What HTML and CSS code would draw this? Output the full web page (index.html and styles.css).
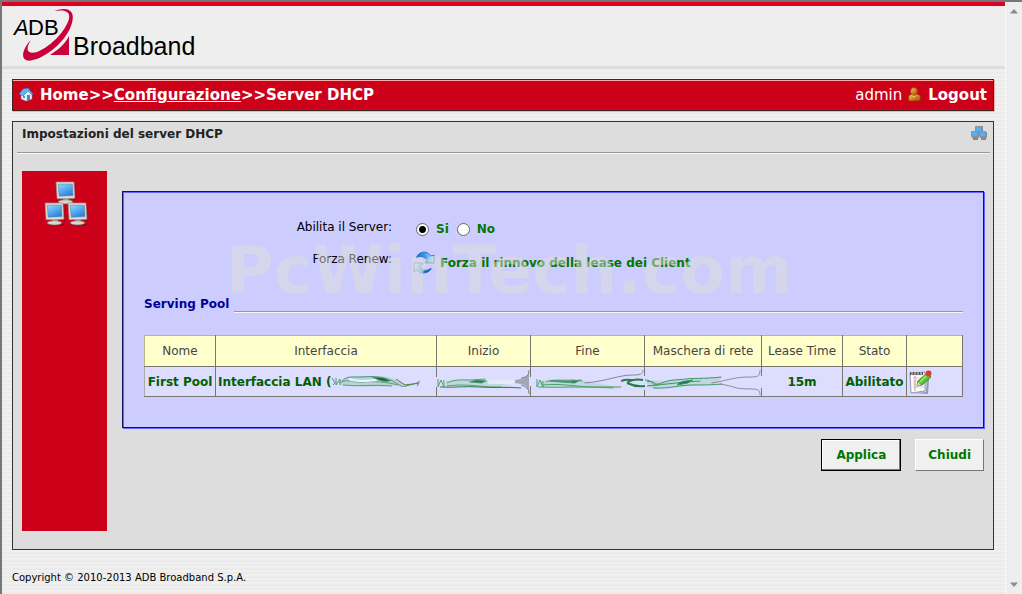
FILE: index.html
```html
<!DOCTYPE html>
<html lang="it">
<head>
<meta charset="utf-8">
<title>Impostazioni del server DHCP</title>
<link rel="stylesheet" href="styles.css">
</head>
<body>
<svg class="defs" width="0" height="0" aria-hidden="true">
  <defs>
    <linearGradient id="screen" x1="0" y1="0" x2="0.6" y2="1">
      <stop offset="0" stop-color="#9bd4fb"/><stop offset="0.5" stop-color="#5aaef0"/><stop offset="1" stop-color="#2c80d8"/>
    </linearGradient>
    <linearGradient id="arrow" x1="0" y1="0" x2="1" y2="0">
      <stop offset="0" stop-color="#1668c8"/><stop offset="0.5" stop-color="#3f9df0"/><stop offset="1" stop-color="#c4e6ff"/>
    </linearGradient>
    <linearGradient id="arrow-back" x1="0" y1="0" x2="1" y2="0.3">
      <stop offset="0" stop-color="#d4ecfd"/><stop offset="0.5" stop-color="#8cc4f2"/><stop offset="1" stop-color="#1668c8"/>
    </linearGradient>
    <linearGradient id="person" x1="0" y1="0" x2="1" y2="1">
      <stop offset="0" stop-color="#ffc45a"/><stop offset="1" stop-color="#a84400"/>
    </linearGradient>
    <symbol id="monitor" viewBox="0 0 20 23">
      <ellipse cx="11" cy="21.5" rx="8" ry="1.5" fill="#000" opacity="0.3"/>
      <path d="M19 2l1 16-2 .5z" fill="#222" opacity="0.35"/>
      <path d="M8 16h5v3H8z" fill="#a9a9a4"/>
      <ellipse cx="10" cy="20" rx="7" ry="2" fill="#d8d8d2" stroke="#85857f" stroke-width="0.7"/>
      <path d="M1 1h17l1 15.500-17 .5z" fill="#e0dfd8" stroke="#969690" stroke-width="0.7"/>
      <path d="M3 3h13.500l.7 11-13.200.5z" fill="url(#screen)" stroke="#4b779d" stroke-width="0.5"/>
    </symbol>
    <symbol id="network" viewBox="0 0 44 48">
      <use href="#monitor" x="11" y="0" width="21" height="24"/>
      <use href="#monitor" x="0" y="21" width="21" height="24"/>
      <use href="#monitor" x="23" y="21" width="21" height="24"/>
    </symbol>
    <symbol id="network-small" viewBox="0 0 16 17">
      <path d="M5 1h7v6H5zM1 7h7v6H1zM9 7h7v6H9z" fill="#667" opacity="0.7"/>
      <path d="M4.500 1.500h6v5h-6zM.5 6.500h6v5h-6zM8.500 6.500h6v5h-6z" fill="#58aef2" stroke="#8795a3"/>
      <path d="M2 13h5v2H2zM10 13h5v2h-5z" fill="#888"/>
    </symbol>
  </defs>
</svg>
<div class="window">
  <div class="page">
    <header class="masthead">
      <svg class="logo" width="200" height="56" viewBox="0 0 200 56" role="img" aria-label="ADB Broadband">
        <path d="M54 5C65 1 76 2 72 17C67 35 46 52 31 54.500C20 56 21 44 31 34C25 43 27 49 37 46C52 40 66 24 69 13C71 4 62 4 54 5Z" fill="#c9003c"/>
        <path d="M69 30v19H50C58 44 65 38 69 30z" fill="#c9003c"/>
        <text class="logo-small" x="28" y="29">DB</text>
        <text class="logo-small logo-slant" x="14" y="29">A</text>
        <text class="logo-large" x="73" y="49">Broadband</text>
      </svg>
    </header>
    <div class="content">
      <nav class="bar">
        <svg width="14" height="14" viewBox="0 0 14 14" aria-hidden="true">
          <path d="M2 6.500V11l5 2 6-2V6L9 2z" fill="#e8eef5" stroke="#8092a8" stroke-width="0.5"/>
          <path d="M0 6L4 1l5-1 5 6-1 1-4-4-5 5z" fill="#65b1ee" stroke="#2470bb" stroke-width="0.6"/>
          <path d="M8 7h3v5H8z" fill="#348ee0"/><path d="M4 8h2v2H4z" fill="#75899f"/>
        </svg>
        <span class="crumbs"><a class="plain" href="#">Home</a>&gt;&gt;<a href="#">Configurazione</a>&gt;&gt;Server DHCP</span>
        <span class="user">admin</span>
        <svg width="13" height="16" viewBox="0 0 13 16" aria-hidden="true">
          <path d="M1 14C-1 8 3 7 5 7h3c3 0 6 2 4 7z" fill="url(#person)" stroke="#8a3200" stroke-width="0.7"/>
          <path d="M3 8l3 2 3-2z" fill="#ffe4a8"/>
          <ellipse cx="6" cy="4.500" rx="3.500" ry="4" fill="url(#person)" stroke="#954000" stroke-width="0.7"/>
        </svg>
        <a class="plain logout" href="#">Logout</a>
      </nav>
      <main class="panel">
        <div class="panel-head">
          <h1>Impostazioni del server DHCP</h1>
          <svg width="16" height="17" viewBox="0 0 16 17" aria-hidden="true"><use href="#network-small"/></svg>
        </div>
        <div class="panel-body">
          <aside class="side">
            <svg width="44" height="48" viewBox="0 0 44 48" aria-hidden="true"><use href="#network"/></svg>
          </aside>
          <form class="form">
            <div class="box">
              <div class="row" role="radiogroup" aria-labelledby="enable">
                <span class="label" id="enable">Abilita il Server:</span>
                <span class="field radios">
                  <input type="radio" name="server" id="si" checked><label for="si">Si</label>
                  <input type="radio" name="server" id="no"><label for="no">No</label>
                </span>
              </div>
              <div class="row">
                <span class="label">Forza Renew:</span>
                <a class="field renew" href="#">
                  <svg width="24" height="24" viewBox="0 0 24 24" aria-hidden="true">
                    <path d="M4 7C7 0 15-1 19 5l3-1v8h-9l2-3c-3-4-7-4-11-2z" fill="url(#arrow)" stroke="#2a6cb0" stroke-width="0.8"/>
                    <path d="M19 17c-3 6-10 7-14 2l-3 2v-9h9l-3 4c3 4 7 4 11 1z" fill="url(#arrow-back)" stroke="#6990b4" stroke-width="0.8"/>
                    <path d="M10 21c4 2 8 0 10-4-3 2-6 3-10 4z" fill="#175fb8"/>
                  </svg>
                  <span>Forza il rinnovo della lease dei Client</span>
                </a>
              </div>
              <div class="section"><h2>Serving Pool</h2><hr></div>
              <table class="pool">
                <colgroup><col class="c-name"><col><col class="c-start"><col class="c-end"><col class="c-mask"><col class="c-lease"><col class="c-state"><col class="c-edit"></colgroup>
                <thead>
                  <tr><th>Nome</th><th>Interfaccia</th><th>Inizio</th><th>Fine</th><th>Maschera di rete</th><th>Lease Time</th><th>Stato</th><th></th></tr>
                </thead>
                <tbody>
                  <tr>
                    <td>First Pool</td>
                    <td class="left"><span class="iface">Interfaccia LAN (<svg width="92" height="16" viewBox="0 0 92 16" fill="none" stroke="#4c9871" aria-hidden="true">
                      <path d="M10 7C18 1 30 3 44 2c14 0 24 4 32 9-12 1-40 3-66 0z" fill="#a9cfc4" stroke="none" opacity="0.7"/>
                      <path d="M1 4l3 5-2 2M5 4v7l4-6v6M11 7c5-5 10-4 18-4 15-1 23 0 30 3 7 2 10 8 16 6s9-1 14-5"/>
                      <path d="M8 9c10-5 14 0 24-1s24 0 35 3M12 11c15 2 31-1 49 1" stroke="#5c9c80"/>
                      <path d="M18 5c8 3 20 2 28 1" stroke="#eef4ff" stroke-width="2"/>
                      <path d="M41 3c9 1 12 0 18 4-8 1-11-1-18-4z" fill="#116438"/>
                      <path d="M65 5l9 6 14-2-2 3" stroke="#6c7a3c"/>
                    </svg></span></td>
                    <td class="smear"><svg width="94" height="28" viewBox="0 0 94 28" fill="none" stroke="#56a173" aria-hidden="true">
                      <path d="M-1 9h3v10h-3zM91 9h4v9h-4z" fill="#ddddff" stroke="none"/>
                      <path d="M9 13c12-3 26-2 40-1l30 7c-20 1-50 0-70-1z" fill="#b4d6cf" stroke="none" opacity="0.7"/>
                      <path d="M1 11v8l3-7 3 7V12M10 15c8-4 17-3 24-3l15-1M10 18c21-3 38 2 55 1"/>
                      <path d="M3 19c13 1 25-1 39 0s29 0 43 1" stroke="#238050"/>
                      <path d="M33 14l7-2 10 1-5 2z" fill="#276e65"/>
                      <path d="M51 13h28M52 15h25" stroke="#e4ebf8" stroke-width="2"/>
                      <path d="M93 2c0 7-5 8-14 10v3c9 1 14 3 14 11" fill="#a5a5b5" stroke="none"/>
                      <path d="M93 2c0 6-3 7-8 8M93 26c0-6-3-7-8-9" stroke="#777780"/>
                    </svg></td>
                    <td class="smear"><svg width="114" height="28" viewBox="0 0 114 28" fill="none" stroke="#4c9d70" aria-hidden="true">
                      <path d="M-1 10h3v8h-3zM111 8h4v14h-4z" fill="#ddddff" stroke="none"/>
                      <path d="M9 13c12-3 26-2 40-1l44 8c-20 1-70 0-84-1z" fill="#b4d6cf" stroke="none" opacity="0.7"/>
                      <path d="M6 11v8l3-7 3 7v-6M15 14c6-3 17-1 27-2l10 1M12 17c18-2 35 2 51 2h28M7 19c20 1 39-1 76 1"/>
                      <path d="M19 13c8-1 15 1 22 0l9-1-6 3-14-1z" fill="#286f64"/>
                      <path d="M54 15c24-2 34-8 48-8 8 0 11-1 11-5" stroke="#858595"/>
                      <path d="M91 13c5-2 8-1 13-1M97 15c5-4 10-4 16-3M97 15c6 3 12 4 18 3" stroke="#257d45" stroke-width="2"/>
                    </svg></td>
                    <td class="smear"><svg width="117" height="28" viewBox="0 0 117 28" fill="none" stroke="#3a9563" aria-hidden="true">
                      <path d="M114 8h4v12h-4z" fill="#ddddff" stroke="none"/>
                      <path d="M2 12c20 2 40-2 76-3l-6 7c-20 1-40 4-68 4z" fill="#b4d6cf" stroke="none" opacity="0.7"/>
                      <path d="M0 12c8 0 7 6 13 5M2 14c8-3 6 5 15 1s19-3 24-4 18 0 36-2M8 20c17 1 27-3 40-3s20 0 30-1M2 18c22-2 35-4 54-5"/>
                      <path d="M33 16c3-3 10-3 15-4l-5 3-10 2z" fill="#247052"/>
                      <path d="M67 15c15-2 22-6 37-6 9 0 12 0 12-7M75 16c16 2 13 5 31 5 8 0 10 1 10 6" stroke="#8c8c98"/>
                    </svg></td>
                    <td>15m</td>
                    <td>Abilitato</td>
                    <td class="left"><a class="edit" href="#" aria-label="Modifica"><svg width="24" height="24" viewBox="0 0 24 24" aria-hidden="true">
                      <path d="M3 23l14-1 1-14 2 1-1 15z" fill="#555" opacity="0.5"/>
                      <path d="M1 3l15-1v19L2 23z" fill="#fcfcff" stroke="#7a81a0" stroke-width="0.8"/>
                      <path d="M4 8h11M4 11h11M4 14h11M4 17h11" stroke="#b7c5df" stroke-width="0.8"/>
                      <path d="M6 6v15" stroke="#e98b8b"/>
                      <path d="M1 2h13v3H1z" fill="#555"/><path d="M3 1v5M6 1v5M9 1v5M12 1v5" stroke="#ddd"/>
                      <path d="M8 16l1-5 9-8 4 4-9 8z" fill="#5ac42f" stroke="#237b12" stroke-width="0.8"/>
                      <path d="M11 12l8-8" stroke="#a3ee76" stroke-width="1.500"/>
                      <path d="M8 16l1-4 3 3z" fill="#eed6a2"/><circle cx="19.500" cy="3.500" r="3" fill="#df3c28"/>
                    </svg></a></td>
                  </tr>
                </tbody>
              </table>
              <div class="watermark" aria-hidden="true">PcWinTech.com</div>
            </div>
            <div class="actions">
              <button class="primary" type="submit">Applica</button>
              <button type="button">Chiudi</button>
            </div>
          </form>
        </div>
      </main>
      <footer>Copyright © 2010-2013 ADB Broadband S.p.A.</footer>
    </div>
  </div>
  <div class="scrollbar" aria-hidden="true">
    <svg width="8" height="5" viewBox="0 0 8 5"><path d="M4 0l4 4.500H0z" fill="#8b8b8b"/></svg>
    <svg width="8" height="5" viewBox="0 0 8 5"><path d="M4 5l4-4.500H0z" fill="#8b8b8b"/></svg>
  </div>
</div>
</body>
</html>
```
FILE: styles.css
```css
* { box-sizing: border-box; }

body {
  margin: 0;
  font-family: Verdana, "DejaVu Sans", sans-serif;
  font-size: 13px;
  line-height: 16px;
  color: #000;
}

.defs { position: absolute; }
svg { display: block; flex: none; }

.window {
  display: flex;
  min-height: 100vh;
  border-top: 2px solid #777;
  border-left: 2px solid #777;
}

.page {
  flex: 1;
  min-width: 0;
  background: repeating-linear-gradient(#f0f0f0 0 2px, #ebebeb 2px 4px);
}

.masthead {
  height: 67px;
  border-top: 4px solid #dd0022;
  border-bottom: 3px solid #dddddd;
  background: #eeeeee;
}

.logo { margin-left: -2px; }
.logo-small { font: 22px "Liberation Sans", Arial, sans-serif; }
.logo-slant { font-style: italic; }
.logo-large { font: 25px "Liberation Sans", Arial, sans-serif; }

.content { padding: 10px 11px 0 10px; }

.bar {
  display: flex;
  align-items: center;
  height: 32px;
  padding: 0 6px;
  border: 1px solid #442222;
  box-shadow: inset 0 1px #ffaaaa, 1px 1px #ffaaaa;
  background: #cc0018;
  color: #fff;
  font-size: 15px;
  line-height: 18px;
}

.crumbs { flex: 1; margin-left: 7px; font-weight: bold; }
.bar a { color: #fff; }
.bar .plain { text-decoration: none; }
.user { margin-right: 6px; }
.logout { margin-left: 7px; font-weight: bold; }

.panel {
  margin-top: 10px;
  padding: 0 3px 18px 4px;
  border: 1px solid #333;
  background: #dddddd;
}

.panel-head {
  display: flex;
  align-items: center;
  justify-content: space-between;
  height: 31px;
  padding: 0 3px 7px 5px;
  border-bottom: 1px solid #999;
  box-shadow: 0 1px #f5f5f5;
}

h1, h2 { margin: 0; font-size: 12px; font-weight: bold; }
h1 { color: #222; }
h2 { color: #000099; }

.panel-body { display: flex; gap: 15px; padding: 18px 6px 0 5px; }

.side {
  flex: none;
  width: 85px;
  min-height: 360px;
  padding: 10px 0 0 22px;
  background: #cc0018;
}

.form { flex: 1; min-width: 0; padding-top: 20px; }

.box {
  position: relative;
  padding: 23px 20px 30px 21px;
  border: 1px solid #111166;
  box-shadow: inset 1px 1px #6666ff, 1px 1px #6666ff;
  background: #ccccff;
}

.row { display: flex; height: 32px; }
.label { width: 248px; padding-top: 4px; text-align: right; font-size: 12px; }
.field { display: flex; align-items: center; color: #007700; font-size: 12px; font-weight: bold; }
.radios { margin-left: 24px; padding-bottom: 4px; }
.radios label { margin: 0 8px 0 7px; }

input[type="radio"] {
  appearance: none;
  width: 13px;
  height: 13px;
  margin: 0;
  border: 1px solid #666;
  border-radius: 50%;
  background: #fff;
}

input[type="radio"]:checked { background: radial-gradient(circle, #000 0 3px, #fff 4px); }

.renew { gap: 4px; margin-left: 20px; text-decoration: none; }

.section { display: flex; align-items: flex-end; gap: 5px; margin-top: 17px; }
.section h2 { padding-bottom: 1px; }
.section hr { flex: 1; height: 2px; margin: 0; border: 0; border-top: 1px solid #999; background: #f5f5f5; }

.pool {
  width: 100%;
  margin-top: 22px;
  table-layout: fixed;
  border-collapse: collapse;
}

.c-name { width: 71px; }
.c-start { width: 94px; }
.c-end { width: 114px; }
.c-mask { width: 117px; }
.c-lease { width: 81px; }
.c-state { width: 64px; }
.c-edit { width: 56px; }

th, td {
  padding: 0;
  border: 1px solid #77776f;
  text-align: center;
  white-space: nowrap;
  font-size: 12px;
}

th { height: 31px; border-top-color: #b8b87c; background: #ffffcc; color: #444; font-weight: normal; }
td { height: 30px; background: #ddddff; color: #006000; font-weight: bold; }
th:first-child { border-left-color: #b8b87c; }
td:first-child { border-left-color: #aaa; }
td.left { padding-left: 2px; text-align: left; }
.iface { display: flex; align-items: center; }
.edit { display: inline-block; vertical-align: middle; }
.smear svg { width: 100%; overflow: visible; }

.watermark {
  position: absolute;
  top: 42px;
  left: 103px;
  color: rgba(222, 222, 216, 0.5);
  font-size: 65px;
  font-weight: bold;
  line-height: 74px;
  pointer-events: none;
}

.actions { display: flex; justify-content: flex-end; gap: 14px; margin-top: 11px; }

button {
  height: 32px;
  padding: 0 12px;
  border: 1px solid;
  border-color: #fff #777 #777 #fff;
  background: #f0f0f0;
  color: #007700;
  font: bold 12px Verdana, "DejaVu Sans", sans-serif;
}

.primary { padding: 0 14px; border-color: #000; box-shadow: inset -1px -1px #777, inset 1px 1px #fff; }

footer { margin-top: 20px; font-size: 10px; line-height: 16px; }

.scrollbar {
  display: flex;
  flex: none;
  flex-direction: column;
  align-items: center;
  justify-content: space-between;
  width: 17px;
  padding: 7px 0;
  border-left: 1px solid #fafafa;
  background: #eeeeee;
}
```
